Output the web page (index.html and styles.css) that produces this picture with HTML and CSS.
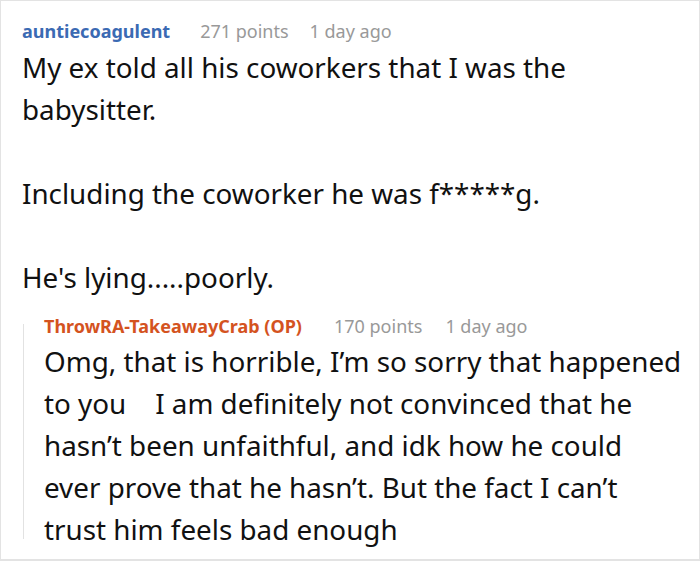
FILE: index.html
```html
<!DOCTYPE html>
<html>
<head>
<meta charset="utf-8">
<link rel="stylesheet" href="styles.css">
</head>
<body>
<div class="frame">
  <div class="comment">
    <div class="meta">
      <span class="user user-blue">auntiecoagulent</span>
      <span class="info">271 points</span>
      <span class="info">1 day ago</span>
    </div>
    <div class="body">
      <p>My ex told all his coworkers that I was the babysitter.</p>
      <p>Including the coworker he was f*****g.</p>
      <p>He's lying.....poorly.</p>
    </div>
    <div class="reply">
      <div class="thread-line"></div>
      <div class="reply-content">
        <div class="meta">
          <span class="user user-op">ThrowRA-TakeawayCrab (OP)</span>
          <span class="info">170 points</span>
          <span class="info">1 day ago</span>
        </div>
        <div class="body">
          <p>Omg, that is horrible, I’m so sorry that happened to you&nbsp;&nbsp;&nbsp; I am definitely not convinced that he hasn’t been unfaithful, and idk how he could ever prove that he hasn’t. But the fact I can’t trust him feels bad enough</p>
        </div>
      </div>
    </div>
  </div>
</div>
</body>
</html>
```
FILE: styles.css
```css
html, body {
  margin: 0;
  padding: 0;
  background: #ffffff;
}
.frame {
  box-sizing: border-box;
  width: 700px;
  height: 561px;
  border: 1px solid #e3e3e3;
  border-bottom-width: 2px;
  overflow: hidden;
  font-family: "Noto Sans", "DejaVu Sans", sans-serif;
  color: #111111;
}
.comment {
  padding: 18px 16px 0 21px;
}
.meta {
  display: flex;
  align-items: baseline;
  gap: 30px;
  font-size: 18px;
  line-height: 24px;
  height: 24px;
  white-space: nowrap;
}
.meta .info {
  color: #999999;
  font-weight: 400;
}
.meta .info + .info {
  margin-left: -9px;
}
.user {
  font-weight: 700;
}
.user-blue {
  color: #3b6ab3;
}
.user-op {
  color: #d4531f;
}
.body {
  margin-top: 3px;
  font-size: 27.8px;
  line-height: 42px;
}
.body p {
  margin: 0 0 42px 0;
}
.body p:last-child {
  margin-bottom: 0;
}
.reply {
  display: flex;
  margin-top: 16px;
}
.thread-line {
  flex: 0 0 auto;
  width: 1px;
  margin: 10px 0 11px 1px;
  background: #e2e2e2;
}
.reply-content {
  flex: 1 1 auto;
  padding-left: 20px;
}
.reply .meta {
  gap: 32px;
}
.reply .body {
  margin-top: 2px;
}
```
